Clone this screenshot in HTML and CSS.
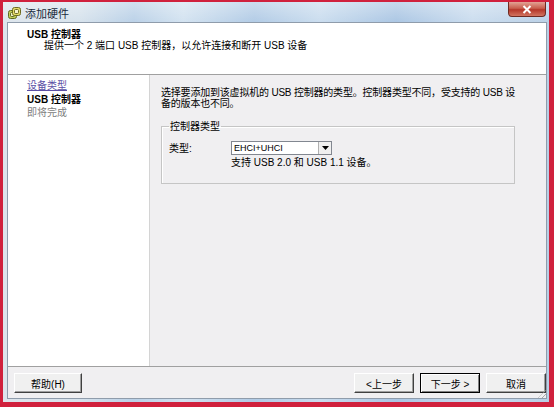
FILE: index.html
```html
<!DOCTYPE html>
<html lang="zh-CN">
<head>
  <meta charset="UTF-8">
  <title>添加硬件</title>
  <link rel="stylesheet" href="styles.css">
</head>
<body>
  <div class="window">
    <div class="titlebar">
      <svg class="app-icon" width="13" height="12" viewBox="0 0 13 12">
        <rect x="0.5" y="3.5" width="8" height="8" rx="2" fill="#c4cf5a" stroke="#5d6a22"/>
        <rect x="2.5" y="5.5" width="4" height="4" rx="1" fill="#eef1c8" stroke="#5d6a22"/>
        <rect x="4.5" y="0.5" width="8" height="8" rx="2" fill="#e3dc6a" stroke="#6d6a20"/>
        <rect x="6.5" y="2.5" width="4" height="4" rx="1" fill="#f6f3cf" stroke="#6d6a20"/>
      </svg>
      <span class="title">添加硬件</span>
      <div class="close">
        <svg width="10" height="9" viewBox="0 0 10 9">
          <path d="M1.5 1 L8.5 8 M8.5 1 L1.5 8" stroke="#fff" stroke-width="2"/>
        </svg>
      </div>
    </div>

    <div class="client">
      <div class="header">
        <div class="header-title">USB 控制器</div>
        <div class="header-desc">提供一个 2 端口 USB 控制器，以允许连接和断开 USB 设备</div>
      </div>

      <div class="main">
        <ul class="steps">
          <li class="done">设备类型</li>
          <li class="current">USB 控制器</li>
          <li class="todo">即将完成</li>
        </ul>

        <div class="content">
          <p class="intro">选择要添加到该虚拟机的 USB 控制器的类型。控制器类型不同，受支持的 USB 设<br>备的版本也不同。</p>
          <fieldset class="group">
            <legend>控制器类型</legend>
            <div class="field">
              <label>类型:</label>
              <div class="combo">
                <span class="combo-value">EHCI+UHCI</span>
                <span class="combo-arrow">
                  <svg width="7" height="4" viewBox="0 0 7 4"><path d="M0 0 H7 L3.5 4 Z" fill="#000"/></svg>
                </span>
              </div>
            </div>
            <div class="hint">支持 USB 2.0 和 USB 1.1 设备。</div>
          </fieldset>
        </div>
      </div>

      <div class="footer">
        <button class="btn help">帮助(H)</button>
        <div class="nav">
          <button class="btn">&lt;上一步</button>
          <button class="btn default">下一步 &gt;</button>
          <button class="btn">取消</button>
        </div>
        <div class="grip"></div>
      </div>
    </div>
  </div>
</body>
</html>
```

FILE: styles.css
```css
body {
  margin: 0;
  padding: 2px 5px 5px 3px;
  background: #d0213d;
  font-family: "Liberation Sans", "Noto Sans CJK SC", sans-serif;
  font-size: 10px;
  color: #000;
}
.window {
  height: 400px;
  box-sizing: border-box;
  padding: 0 3px 4px 5px;
  display: flex;
  flex-direction: column;
  background:
    linear-gradient(180deg, rgba(255, 255, 255, 0.35), rgba(255, 255, 255, 0) 22px),
    linear-gradient(90deg, #dde5ec 0, #d6e2ec 14%, #b9d0e7 24%, #d2e2f0 33%, #b0cae5 46%, #c9dcee 58%, #a9c5e3 72%, #cadcee 86%, #b8cfe6 100%);
}
.titlebar {
  height: 21px;
  display: flex;
  align-items: center;
}
.title {
  margin-left: 4px;
  font-size: 11px;
  color: #1b2b3c;
}
.close {
  margin-left: auto;
  align-self: flex-start;
  width: 38px;
  height: 15px;
  box-sizing: border-box;
  border: 1px solid #6e2a22;
  border-top: none;
  border-radius: 0 0 4px 4px;
  background: linear-gradient(180deg, #e2a394, #c85e4d 45%, #b5372a 55%, #d27460);
  display: flex;
  align-items: center;
  justify-content: center;
}
.client {
  flex: 1;
  display: flex;
  flex-direction: column;
  background: #f0eff1;
  box-shadow: 0 0 0 1px #8f9cab;
}
.header {
  height: 52px;
  box-sizing: border-box;
  padding: 6px 0 0 19px;
  background: #fff;
  border-bottom: 1px solid #a0a0a0;
  line-height: 11px;
}
.header-title {
  font-weight: bold;
}
.header-desc {
  padding-left: 17px;
}
.main {
  flex: 1;
  display: flex;
}
.steps {
  flex-shrink: 0;
  width: 142px;
  margin: 0;
  padding: 4px 0 0 19px;
  box-sizing: border-box;
  list-style: none;
  background: #fff;
  border-right: 1px solid #d4d4d4;
  line-height: 13.5px;
}
.steps .done {
  color: #5b4fa5;
  text-decoration: underline;
}
.steps .current {
  font-weight: bold;
}
.steps .todo {
  color: #808080;
}
.content {
  flex: 1;
  min-width: 0;
  padding: 12px 31px 0 11px;
}
.intro {
  margin: 0;
  line-height: 11px;
  white-space: nowrap;
  letter-spacing: -0.2px;
}
.group {
  margin: 12px 0 0;
  padding: 8px 7px 15px;
  border: 1px solid #c5c5c5;
  box-shadow: inset 1px 1px #fff;
}
.group legend {
  padding: 0 1px;
  line-height: 11px;
}
.field {
  display: flex;
  align-items: center;
}
.field label {
  width: 62px;
}
.combo {
  width: 101px;
  height: 14px;
  box-sizing: border-box;
  border: 1px solid #828790;
  background: #fff;
  display: flex;
  align-items: center;
}
.combo-value {
  flex: 1;
  padding-left: 2px;
  font-size: 9px;
}
.combo-arrow {
  width: 13px;
  height: 12px;
  box-sizing: border-box;
  border-left: 1px solid #b0b0b0;
  background: #f0f0f0;
  display: flex;
  align-items: center;
  justify-content: center;
}
.hint {
  margin: 2px 0 0 62px;
  line-height: 11px;
}
.footer {
  position: relative;
  height: 32px;
  box-sizing: border-box;
  padding: 6px 0 0 6px;
  border-top: 1px solid #a0a0a0;
  display: flex;
  align-items: flex-start;
}
.nav {
  margin-left: auto;
  display: flex;
  gap: 6px;
}
.btn {
  width: 60px;
  height: 20px;
  padding: 0;
  box-sizing: border-box;
  font: inherit;
  color: #000;
  background: #f0f0f0;
  border: 1px solid;
  border-color: #fff #404040 #404040 #fff;
  box-shadow: inset -1px -1px #a0a0a0;
}
.btn.help {
  width: 68px;
}
.btn.default {
  border-color: #000;
  box-shadow: inset 1px 1px #fff, inset -1px -1px #808080;
}
.grip {
  position: absolute;
  right: 0;
  bottom: 0;
  width: 8px;
  height: 8px;
  background: repeating-linear-gradient(135deg, transparent 0 2px, #a8a8a8 2px 3px);
  clip-path: polygon(100% 0, 100% 100%, 0 100%);
}
```
